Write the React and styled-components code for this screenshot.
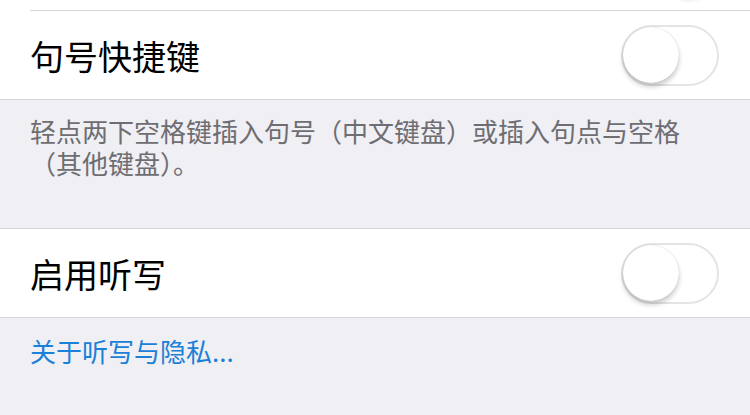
import React from "react";
import styled, { createGlobalStyle } from "styled-components";

const GlobalStyle = createGlobalStyle`
  body {
    margin: 0;
    background: #efeff4;
    font-family: "Noto Sans CJK SC", "Noto Sans", sans-serif;
  }
`;

const Page = styled.div`
  width: 750px;
  height: 415px;
  overflow: hidden;
  background: #efeff4;
`;

const Group = styled.section`
  background: #fff;
  border-top: ${(p) => (p.$noTop ? "none" : "1px solid #d6d6da")};
  border-bottom: 1px solid #d6d6da;
  margin-top: ${(p) => p.$offset || 0}px;
`;

const Row = styled.div`
  display: flex;
  padding-left: 30px;
  height: 88px;
`;

const RowInner = styled.div`
  flex: 1;
  display: flex;
  align-items: center;
  justify-content: ${(p) => (p.$end ? "flex-end" : "space-between")};
  padding-right: 31px;
  border-bottom: ${(p) => (p.$divider ? "1px solid #d6d6da" : "none")};
`;

const Label = styled.span`
  font-size: 34px;
  color: #000;
`;

const Track = styled.div`
  box-sizing: border-box;
  width: 98px;
  height: 61px;
  border-radius: 31px;
  border: 2px solid ${(p) => (p.$on ? "#4cd964" : "#e4e4e6")};
  background: ${(p) => (p.$on ? "#4cd964" : "#fff")};
  display: flex;
  align-items: center;
  justify-content: ${(p) => (p.$on ? "flex-end" : "flex-start")};
`;

const Knob = styled.div`
  width: 56px;
  height: 56px;
  border-radius: 50%;
  background: #fff;
  box-shadow: 0 4px 5px rgba(0, 0, 0, 0.2), 0 0 1px rgba(0, 0, 0, 0.25);
`;

const Footer = styled.p`
  margin: 0;
  padding: ${(p) => p.$pad || "15px 30px 49px"};
  font-size: 26px;
  line-height: 32px;
  color: ${(p) => (p.$link ? "#1b80d8" : "#6d6d72")};
`;

const Toggle = ({ on }) => (
  <Track $on={on}>
    <Knob />
  </Track>
);

export default function App() {
  return (
    <Page>
      <GlobalStyle />
      <Group $noTop $offset={-77}>
        {/* row scrolled off the top: only its toggle's shadow shows */}
        <Row>
          <RowInner $divider $end>
            <Toggle on />
          </RowInner>
        </Row>
        <Row>
          <RowInner>
            <Label>句号快捷键</Label>
            <Toggle />
          </RowInner>
        </Row>
      </Group>
      <Footer>
        轻点两下空格键插入句号（中文键盘）或插入句点与空格（其他键盘）。
      </Footer>
      <Group>
        <Row>
          <RowInner>
            <Label>启用听写</Label>
            <Toggle />
          </RowInner>
        </Row>
      </Group>
      <Footer $link $pad="17px 30px">
        关于听写与隐私...
      </Footer>
    </Page>
  );
}
